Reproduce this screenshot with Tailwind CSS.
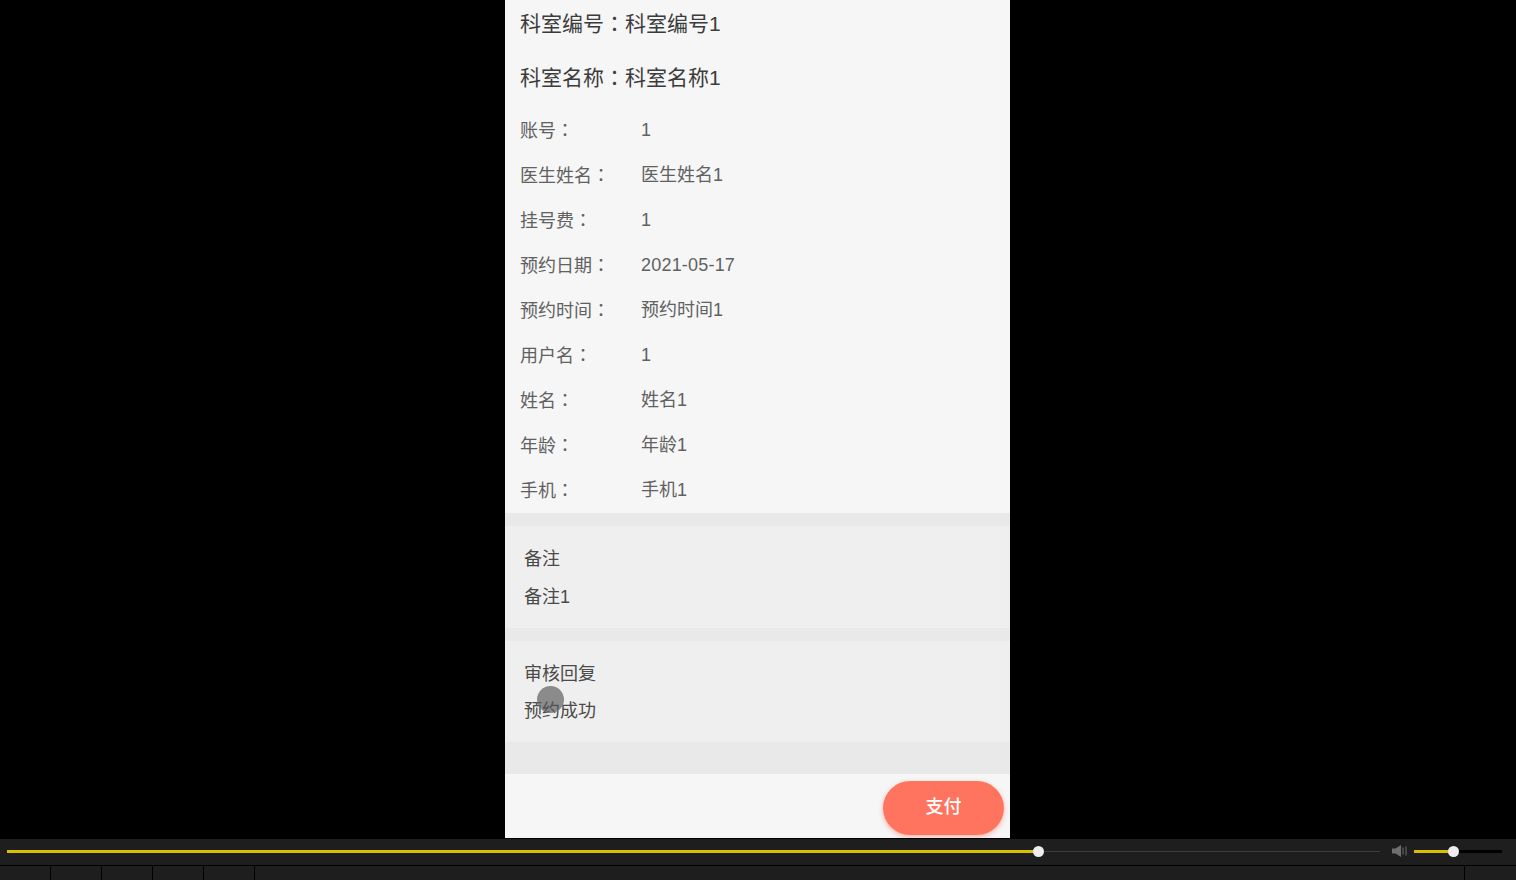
<!DOCTYPE html>
<html lang="zh">

<head>
    <meta charset="UTF-8">
    <title>详情</title>
    <script src="https://cdn.jsdelivr.net/npm/@tailwindcss/browser@4"></script>
</head>

<body class="bg-black h-[880px] w-[1516px] overflow-hidden flex flex-col font-['Liberation_Sans','Noto_Sans_CJK_SC',sans-serif]">

    <!-- PAGE -->
    <div class="w-[505px] h-[838px] ml-[505px] bg-[#f6f6f6] flex flex-col shrink-0">

        <!-- HEADINGS -->
        <div class="h-[107px] px-[15px] text-[21px] text-[#3c3c3c] flex flex-col">
            <div class="h-[48px] leading-[44px]">科室编号<span lang="zh-Hant" class="font-['Noto_Sans_CJK_TC']">：</span>科室编号1</div>
            <div class="h-[59px] leading-[56px]">科室名称<span lang="zh-Hant" class="font-['Noto_Sans_CJK_TC']">：</span>科室名称1</div>
        </div>

        <!-- FIELDS -->
        <div class="pt-[1px] px-[15px] text-[18px] text-[#616161] flex flex-col h-[406px]">
            <div class="flex h-[45px] items-center"><span class="w-[121px]">账号<span lang="zh-Hant" class="font-['Noto_Sans_CJK_TC']">：</span></span><span>1</span></div>
            <div class="flex h-[45px] items-center"><span class="w-[121px]">医生姓名<span lang="zh-Hant" class="font-['Noto_Sans_CJK_TC']">：</span></span><span>医生姓名1</span></div>
            <div class="flex h-[45px] items-center"><span class="w-[121px]">挂号费<span lang="zh-Hant" class="font-['Noto_Sans_CJK_TC']">：</span></span><span>1</span></div>
            <div class="flex h-[45px] items-center"><span class="w-[121px]">预约日期<span lang="zh-Hant" class="font-['Noto_Sans_CJK_TC']">：</span></span><span class="tracking-[0.2px]">2021-05-17</span></div>
            <div class="flex h-[45px] items-center"><span class="w-[121px]">预约时间<span lang="zh-Hant" class="font-['Noto_Sans_CJK_TC']">：</span></span><span>预约时间1</span></div>
            <div class="flex h-[45px] items-center"><span class="w-[121px]">用户名<span lang="zh-Hant" class="font-['Noto_Sans_CJK_TC']">：</span></span><span>1</span></div>
            <div class="flex h-[45px] items-center"><span class="w-[121px]">姓名<span lang="zh-Hant" class="font-['Noto_Sans_CJK_TC']">：</span></span><span>姓名1</span></div>
            <div class="flex h-[45px] items-center"><span class="w-[121px]">年龄<span lang="zh-Hant" class="font-['Noto_Sans_CJK_TC']">：</span></span><span>年龄1</span></div>
            <div class="flex h-[45px] items-center"><span class="w-[121px]">手机<span lang="zh-Hant" class="font-['Noto_Sans_CJK_TC']">：</span></span><span>手机1</span></div>
        </div>

        <!-- NOTES -->
        <div class="h-[13px] bg-[#e9e9e9]"></div>
        <div class="h-[102px] bg-[#efefef] px-[19px] pt-[14px] text-[18px] text-[#4a4a4a]">
            <div class="h-[38px] leading-[38px]">备注</div>
            <div class="h-[38px] leading-[38px]">备注1</div>
        </div>

        <!-- REPLY -->
        <div class="h-[13px] bg-[#e9e9e9]"></div>
        <div class="h-[101px] bg-[#efefef] px-[19px] pt-[14px] text-[18px] text-[#4a4a4a] relative">
            <div class="h-[38px] leading-[38px]">审核回复</div>
            <div class="h-[38px] leading-[36px]">预约成功</div>
            <div class="absolute left-[32px] top-[45px] w-[27px] h-[27px] rounded-full bg-[#555]/65 border border-[#888]/60"></div>
        </div>
        <div class="h-[32px] bg-[#e9e9e9]"></div>

        <!-- ACTIONS -->
        <div class="flex-1 flex justify-end items-start pt-[7px] pr-[6px]">
            <button type="button" class="w-[121px] h-[54px] pb-[1px] rounded-full bg-[#ff745e] text-white text-[18px] font-medium shadow-[0_2px_5px_rgba(255,100,80,0.45)]">
                支付
            </button>
        </div>
    </div>

    <!-- PLAYER CONTROLS -->
    <div class="h-[1px] bg-black shrink-0"></div>
    <div class="h-[26px] pb-[2px] bg-[#1e1e1e] flex items-center shrink-0 pl-[7px]">
        <div class="w-[1373px] h-[1px] bg-[#3c3c3c] relative">
            <div class="absolute left-0 top-[-1px] w-[1031px] h-[3px] bg-[#d8c000]"></div>
            <div class="absolute left-[1026px] top-[-5px] w-[11px] h-[11px] rounded-full bg-[#eeeeee]"></div>
        </div>
        <svg class="ml-[12px]" width="16" height="12" viewBox="0 0 16 12">
            <path d="M0 3.5h3.5L9 0v12L3.5 8.5H0z" fill="#6f6f6f" />
            <path d="M11 2.5v7M14 1.5v9" stroke="#6f6f6f" stroke-width="1" fill="none" />
        </svg>
        <div class="ml-[6px] w-[88px] h-[3px] bg-black relative">
            <div class="absolute left-0 top-0 w-[39px] h-[3px] bg-[#d8c000]"></div>
            <div class="absolute left-[34px] top-[-4px] w-[11px] h-[11px] rounded-full bg-[#eeeeee]"></div>
        </div>
    </div>

    <!-- TOOLBAR -->
    <div class="h-[1px] bg-black shrink-0"></div>
    <div class="flex-1 bg-[#1e1e1e] flex">
        <div class="w-[51px] border-r border-black"></div>
        <div class="w-[51px] border-r border-black"></div>
        <div class="w-[51px] border-r border-black"></div>
        <div class="w-[51px] border-r border-black"></div>
        <div class="w-[51px] border-r border-black"></div>
        <div class="w-[1210px] border-r border-black"></div>
    </div>
</body>

</html>
